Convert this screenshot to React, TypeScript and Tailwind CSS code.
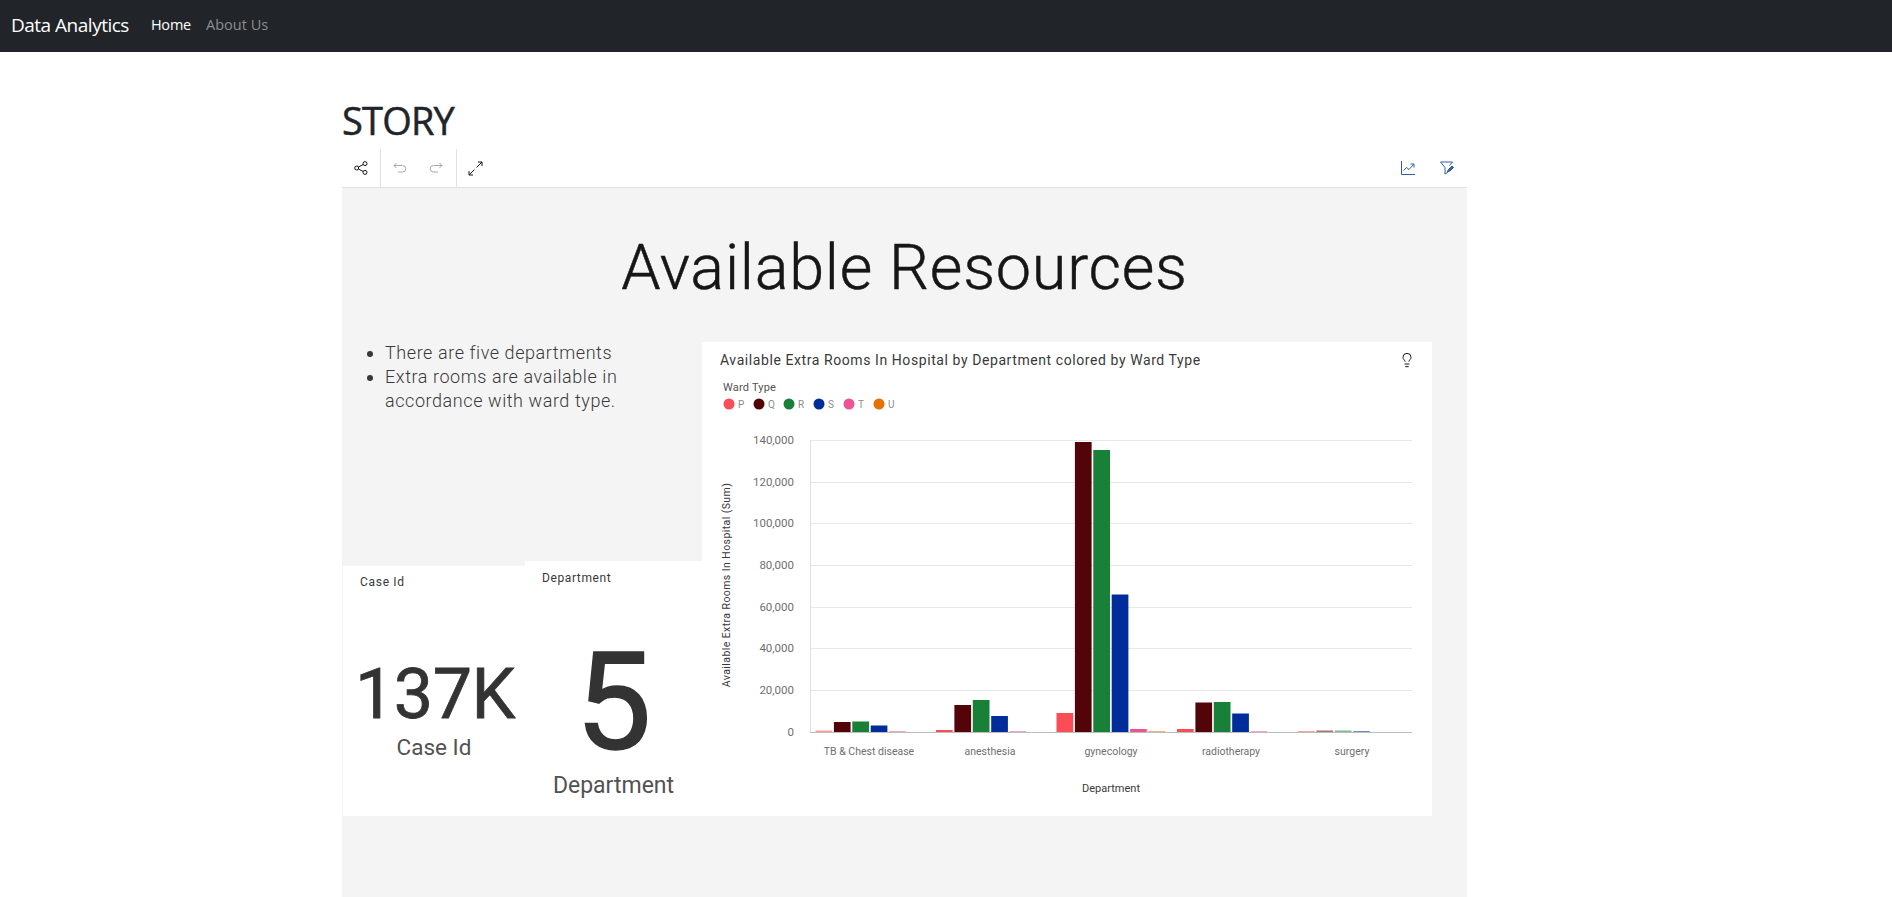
import { Lightbulb } from 'lucide-react';

const COLORS = ['#fa4d56', '#520408', '#198038', '#002d9c', '#ee5396', '#e57200'];
const LEGEND = ['P', 'Q', 'R', 'S', 'T', 'U'];
const LEGEND_X = [729, 759, 789, 819, 849, 879];

const BASELINE = 732;
const GRID = [
  { label: '140,000', y: 440 },
  { label: '120,000', y: 482 },
  { label: '100,000', y: 523 },
  { label: '80,000', y: 565 },
  { label: '60,000', y: 607 },
  { label: '40,000', y: 648 },
  { label: '20,000', y: 690 },
];

// bar tops in page pixels, one list per department, null = no bar
const GROUPS = [
  { name: 'TB & Chest disease', x: 815.5, center: 869, tops: [730.5, 722, 721.5, 725.5, 731, null] },
  { name: 'anesthesia', x: 936, center: 990, tops: [730, 705, 700, 716, 731, null] },
  { name: 'gynecology', x: 1056.5, center: 1111, tops: [713, 442, 450, 594.5, 729, 731] },
  { name: 'radiotherapy', x: 1177, center: 1231, tops: [729, 702.5, 702, 713.5, 731, null] },
  { name: 'surgery', x: 1298, center: 1352, tops: [731, 730.5, 730.5, 731, null, null] },
];

function ShareIcon() {
  return (
    <svg width="14" height="14" viewBox="0 0 14 14" fill="none" stroke="#161616" strokeWidth="1">
      <circle cx="2.7" cy="7" r="2" />
      <circle cx="11" cy="2.6" r="2" />
      <circle cx="11" cy="11.4" r="2" />
      <path d="M4.5 6 9.2 3.5M4.5 8l4.7 2.5" />
    </svg>
  );
}

function UndoIcon({ flip }: { flip?: boolean }) {
  return (
    <svg width="14" height="14" viewBox="0 0 14 14" fill="none" stroke="#a8a8a8" strokeWidth="1" className={flip ? '-scale-x-100' : ''}>
      <path d="M3.5 2 1 4.5 3.5 7" />
      <path d="M1 4.5h8.5a3 3 0 0 1 0 6.5H5" />
    </svg>
  );
}

function ExpandIcon() {
  return (
    <svg width="15" height="15" viewBox="0 0 15 15" fill="none" stroke="#161616" strokeWidth="1">
      <path d="M10 1h4v4M14 1 8.500 6.500" />
      <path d="M1 10v4h4M1 14l5.500-5.500" />
    </svg>
  );
}

function TrendIcon() {
  return (
    <svg width="14" height="14" viewBox="0 0 14 14" fill="none" stroke="#2f5fa8" strokeWidth="1">
      <path d="M.5 0v13.500H14" />
      <path d="M2.500 9.500 5.500 6.500 8 8.500 12.500 3.500" />
      <path d="M9.500 3h3.500v3.500" />
    </svg>
  );
}

function FilterEditIcon() {
  return (
    <svg width="14" height="14" viewBox="0 0 14 14" fill="none" stroke="#2f5fa8" strokeWidth="1">
      <path d="M.5 1h12l-3 3.500" />
      <path d="M.5 1 5 6.500V13l2.500-1.500V9.500" />
      <path d="M8 10.500 8.500 8.500 12 5 13.500 6.500 10 10z" fill="#2f5fa8" />
    </svg>
  );
}

function Chart() {
  return (
    <svg viewBox="702 342 730 474" width="730" height="474" className="block" fontFamily="Roboto, sans-serif">
      <text x="720" y="365" fontSize="14" fill="#393939" letterSpacing="0.58">
        Available Extra Rooms In Hospital by Department colored by Ward Type
      </text>
      <text x="723" y="391" fontSize="11" fill="#525252" letterSpacing="0.2">
        Ward Type
      </text>
      {LEGEND.map((l, i) => (
        <g key={l}>
          <circle cx={LEGEND_X[i]} cy="404" r="5.500" fill={COLORS[i]} />
          <text x={LEGEND_X[i] + 9} y="408" fontSize="10" fill="#8d8d8d">
            {l}
          </text>
        </g>
      ))}

      {GRID.map((g) => (
        <g key={g.label}>
          <line x1="810" x2="1412" y1={g.y + 0.5} y2={g.y + 0.5} stroke="#e8e8e8" strokeWidth="1" />
          <text x="794" y={g.y + 4} fontSize="11.500" fill="#6f6f6f" textAnchor="end">
            {g.label}
          </text>
        </g>
      ))}
      <text x="794" y={BASELINE + 4} fontSize="11.500" fill="#6f6f6f" textAnchor="end">
        0
      </text>
      <line x1="810.5" x2="810.5" y1="440" y2={BASELINE} stroke="#e0e0e0" strokeWidth="1" />

      {GROUPS.map((g) =>
        g.tops.map((top, i) =>
          top === null ? null : (
            <rect
              key={g.name + i}
              x={g.x + i * 18.4}
              y={top}
              width="16.700"
              height={BASELINE - top}
              fill={COLORS[i]}
              opacity={BASELINE - top <= 1.500 ? 0.55 : 1}
            />
          ),
        ),
      )}
      <line x1="810" x2="1412" y1={BASELINE + 0.5} y2={BASELINE + 0.5} stroke="#bdbdbd" strokeWidth="1" />

      {GROUPS.map((g) => (
        <text key={g.name} x={g.center} y="755" fontSize="10.500" fill="#6f6f6f" textAnchor="middle">
          {g.name}
        </text>
      ))}
      <text x="1111" y="792" fontSize="11" fill="#393939" textAnchor="middle">
        Department
      </text>
      <text
        transform="translate(730 585) rotate(-90)"
        fontSize="10.500"
        fill="#393939"
        textAnchor="middle"
        letterSpacing="0.42"
      >
        Available Extra Rooms In Hospital (Sum)
      </text>
    </svg>
  );
}

export default function App() {
  return (
    <div className="min-h-[897px] bg-white font-['Open_Sans',sans-serif] overflow-hidden">
      <nav className="h-[52px] bg-[#212529] flex items-center pl-[11px] pb-[2px]">
        <span className="text-white text-[19px] tracking-[-0.5px]">Data Analytics</span>
        <span className="text-white text-[14.500px] ml-[22px] tracking-[-0.2px]">Home</span>
        <span className="text-[#8b8d8f] text-[14.500px] ml-[15px]">About Us</span>
      </nav>

      <div className="w-[1125px] ml-[342px]">
        <h1 className="h-[97px] flex items-end text-[#212529] text-[38px] leading-[46px] font-medium tracking-[-0.8px] pb-[6px] [-webkit-text-stroke:0.5px_#212529]">
          STORY
        </h1>

        <div className="h-[38px] flex items-center">
          <div className="w-[39px] h-full flex items-center justify-center pr-px border-r border-[#e0e0e0]">
            <ShareIcon />
          </div>
          <div className="w-[76px] h-full flex items-center justify-center gap-[22px] pr-px border-r border-[#e0e0e0]">
            <UndoIcon />
            <UndoIcon flip />
          </div>
          <div className="w-[38px] h-full flex items-center justify-center pr-[2px]">
            <ExpandIcon />
          </div>
          <div className="ml-auto flex items-center gap-[25px] pr-[13px]">
            <TrendIcon />
            <FilterEditIcon />
          </div>
        </div>

        <div className="h-[710px] bg-[#f4f4f4] border-t border-[#e0e0e0] font-['Roboto',sans-serif]">
          <div className="h-[154px] flex items-center justify-center pt-[6px]">
            <h2 className="text-[#161616] text-[63px] font-light tracking-[0.73px] [-webkit-text-stroke:0.5px_#161616]">Available Resources</h2>
          </div>

          <div className="flex ml-px">
            <div className="w-[359px] flex flex-col">
              <ul className="flex-1 -mt-px list-disc pl-[42px] pr-[69px] text-[18px] leading-6 font-light text-[#393939] tracking-[0.57px]">
                <li>There are five departments</li>
                <li>Extra rooms are available in accordance with ward type.</li>
              </ul>

              <div className="flex items-end">
                <div className="w-[182px] h-[250px] bg-white flex flex-col">
                  <div className="text-[12px] text-[#393939] pl-[17px] pt-[8px] leading-4 tracking-[0.7px]">Case Id</div>
                  <div className="text-center text-[#333333] text-[70px] font-normal leading-[80px] mt-[64px] pl-[2px] tracking-[-0.5px] [-webkit-text-stroke:0.8px_#333333]">137K</div>
                  <div className="text-center text-[#525252] text-[22.500px] leading-7 mt-[-1px]">Case Id</div>
                </div>
                <div className="w-[177px] h-[255px] bg-white flex flex-col">
                  <div className="text-[12px] text-[#393939] pl-[17px] pt-[9px] leading-4 tracking-[0.6px]">Department</div>
                  <div className="text-center text-[#333333] text-[136px] font-normal leading-[130px] mt-[52px] [-webkit-text-stroke:1.5px_#333333]">5</div>
                  <div className="text-center text-[#525252] text-[23px] leading-7 mt-[4px]">Department</div>
                </div>
              </div>
            </div>

            <div className="relative bg-white">
              <Chart />
              <Lightbulb className="absolute top-[10px] right-[17px] w-4 h-4 text-[#161616]" strokeWidth={1.5} />
            </div>
          </div>
        </div>
      </div>
    </div>
  );
}
